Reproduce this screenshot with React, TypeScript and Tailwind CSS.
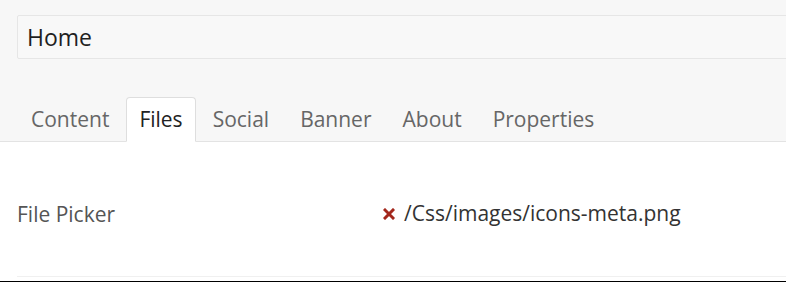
import React, { useState } from 'react';

const TABS = ['Content', 'Files', 'Social', 'Banner', 'About', 'Properties'];

export default function App() {
  const [active, setActive] = useState('Files');
  const [title, setTitle] = useState('Home');

  return (
    <div className="w-[786px] h-[282px] overflow-hidden bg-white flex flex-col" style={{ fontFamily: '"Open Sans", "Liberation Sans", sans-serif' }}>
      <div className="bg-[#f7f7f7] pt-[15px] pl-[17px] border-b border-[#e3e3e3]">
        <input
          value={title}
          onChange={e => setTitle(e.target.value)}
          className="w-[800px] h-[44px] bg-[#f8f8f8] border border-[#e6e6e6] rounded-[2px] pl-[9px] text-[23px] text-[#1f1f1f] outline-none"
        />
        <div className="flex gap-[3px] mt-[38px] -mb-px">
          {TABS.map(tab => (
            <button
              key={tab}
              onClick={() => setActive(tab)}
              className={
                tab === active
                  ? 'px-[12px] h-[45px] text-[21px] text-[#222] bg-white border border-[#dedede] border-b-white rounded-t-[4px]'
                  : 'px-[13px] h-[45px] text-[21px] text-[#666] border border-transparent'
              }
            >
              {tab}
            </button>
          ))}
        </div>
      </div>

      <div className="flex-1 pl-[17px] flex flex-col">
        <div className="flex items-center h-[135px] pt-[12px] border-b border-[#f0f0f0]">
          <div className="w-[366px] text-[21px] text-[#555]">File Picker</div>
          <div className="flex items-center gap-[9px] -mt-[2px]">
            <svg width="12" height="12" viewBox="0 0 12 12">
              <path d="M2 2 L10 10 M10 2 L2 10" stroke="#a3271c" strokeWidth="3" strokeLinecap="square" />
            </svg>
            <span className="text-[21px] text-[#333]">/Css/images/icons-meta.png</span>
          </div>
        </div>
      </div>
      <div className="h-[1px] bg-black" />
    </div>
  );
}
